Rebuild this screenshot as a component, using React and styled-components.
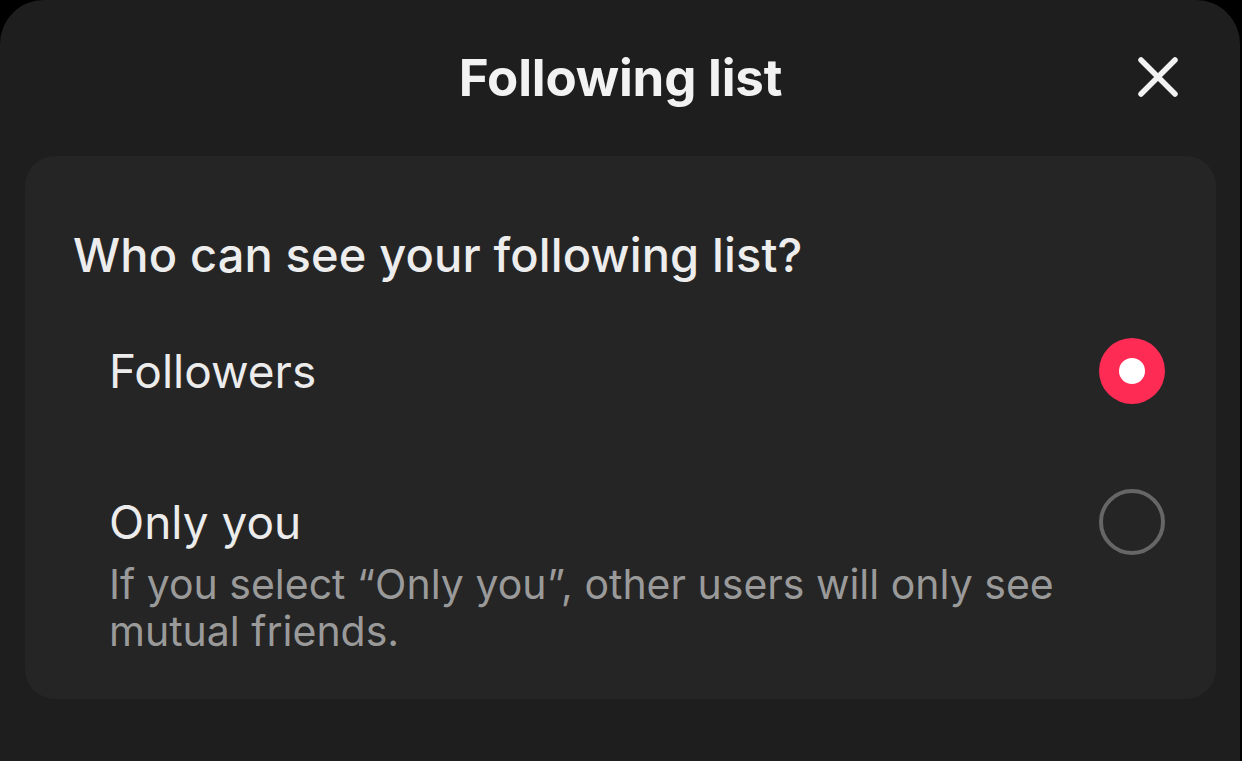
import styled, { createGlobalStyle } from 'styled-components'

const Global = createGlobalStyle`
    html, body {
        margin: 0;
        padding: 0;
        background: #000;
        font-family: "Inter", "Liberation Sans", sans-serif;
    }
    #root { height: 761px; }
`

const Sheet = styled.main`
    height: 761px;
    width: 1240px;
    box-sizing: border-box;
    background: #1e1e1e;
    border-radius: 44px 44px 0 0;
    display: flex;
    flex-direction: column;
    padding: 0 24px 0 25px;
`

const Header = styled.header`
    height: 156px;
    box-sizing: border-box;
    padding-top: 48px;
    display: grid;
    grid-template-columns: 1fr auto 1fr;
    align-items: start;
`

const Title = styled.h1`
    grid-column: 2;
    margin: 0;
    font-size: 51px;
    line-height: 60px;
    font-weight: 700;
    color: #f2f2f2;
    letter-spacing: -0.2px;
`

const Close = styled.button`
    grid-column: 3;
    justify-self: end;
    margin: 7px 36px 0 0;
    width: 44px;
    height: 44px;
    padding: 0;
    background: none;
    border: none;
    display: flex;
`

const Card = styled.section`
    background: #252525;
    border-radius: 30px;
    padding: 71px 51px 44px 48px;
    display: flex;
    flex-direction: column;
`

const Question = styled.h2`
    margin: 0 0 60px;
    font-size: 47px;
    font-weight: 500;
    color: #ededed;
    line-height: 56px;
    letter-spacing: 0.15px;
`

const Option = styled.div`
    display: flex;
    justify-content: space-between;
    align-items: flex-start;
    padding-left: 36px;
    margin-bottom: ${p => p.gap || 0}px;
`

const Texts = styled.div`
    display: flex;
    flex-direction: column;
`

const Label = styled.div`
    font-size: 46px;
    color: #ececec;
    line-height: 56px;
`

const Hint = styled.div`
    font-size: 41px;
    color: #9a9a9a;
    line-height: 47px;
    max-width: 970px;
    margin-top: 11px;
`

const Radio = styled.span`
    width: 66px;
    height: 66px;
    margin-top: -5px;
    box-sizing: border-box;
    border-radius: 50%;
    flex-shrink: 0;
    display: flex;
    align-items: center;
    justify-content: center;
    background: ${p => (p.checked ? '#fe2c55' : 'transparent')};
    border: ${p => (p.checked ? 'none' : '4px solid #666')};
    &::after {
        content: '';
        display: ${p => (p.checked ? 'block' : 'none')};
        width: 26px;
        height: 26px;
        border-radius: 50%;
        background: #fff;
    }
`

export default function App() {
    return (
        <>
            <Global />
            <Sheet>
                <Header>
                    <Title>Following list</Title>
                    <Close aria-label="Close">
                        <svg width="44" height="44" viewBox="0 0 44 44">
                            <path d="M5 5 L39 39 M39 5 L5 39" stroke="#f2f2f2" strokeWidth="5.5" strokeLinecap="round" />
                        </svg>
                    </Close>
                </Header>
                <Card>
                    <Question>Who can see your following list?</Question>
                    <Option gap={90}>
                        <Label>Followers</Label>
                        <Radio checked />
                    </Option>
                    <Option>
                        <Texts>
                            <Label>Only you</Label>
                            <Hint>If you select “Only you”, other users will only see mutual friends.</Hint>
                        </Texts>
                        <Radio />
                    </Option>
                </Card>
            </Sheet>
        </>
    )
}
